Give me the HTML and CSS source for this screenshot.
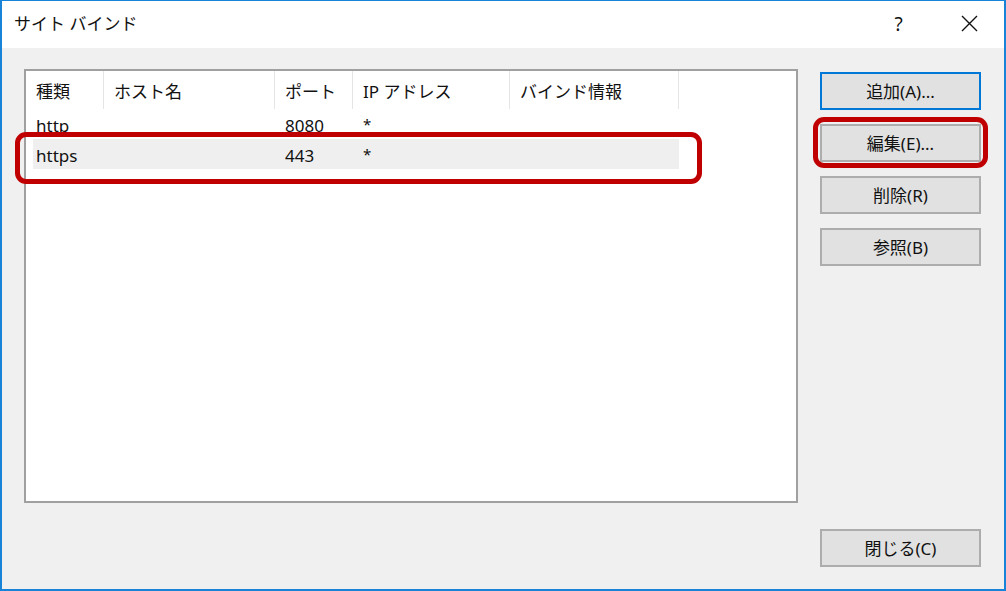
FILE: index.html
```html
<!DOCTYPE html>
<html lang="ja">

<head>
    <meta charset="UTF-8">
    <title>サイト バインド</title>
    <link rel="stylesheet" href="styles.css">
</head>

<body>
    <div class="Window">
        <div class="TitleBar">
            <span class="Title">サイト バインド</span>
            <div class="CapBtns">
                <span class="CapBtn">?</span>
                <span class="CapBtn">
                    <svg width="17" height="17" viewBox="0 0 17 17">
                        <path d="M1 1 L16 16 M16 1 L1 16" stroke="#111" stroke-width="1.4" fill="none" />
                    </svg>
                </span>
            </div>
        </div>
        <div class="Content">
            <div class="ListView">
                <div class="LvHead">
                    <div class="HeadCell">種類</div>
                    <div class="HeadCell">ホスト名</div>
                    <div class="HeadCell">ポート</div>
                    <div class="HeadCell">IP アドレス</div>
                    <div class="HeadCell">バインド情報</div>
                </div>
                <div class="LvBody">
                    <div class="LvRow">
                        <div class="Cell">http</div>
                        <div class="Cell"></div>
                        <div class="Cell">8080</div>
                        <div class="Cell star">*</div>
                        <div class="Cell"></div>
                    </div>
                    <div class="LvRow sel">
                        <div class="Cell">https</div>
                        <div class="Cell"></div>
                        <div class="Cell">443</div>
                        <div class="Cell star">*</div>
                        <div class="Cell"></div>
                        <div class="Mark RowMark"></div>
                    </div>
                </div>
            </div>
            <div class="BtnCol">
                <button class="Btn def">追加(A)...</button>
                <div class="BtnWrap">
                    <button class="Btn">編集(E)...</button>
                    <div class="Mark BtnMark"></div>
                </div>
                <button class="Btn">削除(R)</button>
                <button class="Btn">参照(B)</button>
                <button class="Btn CloseBtn">閉じる(C)</button>
            </div>
        </div>
    </div>
</body>

</html>
```

FILE: styles.css
```css
* {
    box-sizing: border-box;
}

body {
    margin: 0;
    background-color: #fff;
    font-family: "Noto Sans", "Noto Sans CJK JP", sans-serif;
    font-size: 17px;
    color: #111;
}

.Window {
    width: 1006px;
    height: 591px;
    border: 2px solid #1883d7;
    border-top-width: 1px;
    display: flex;
    flex-direction: column;
}

.TitleBar {
    height: 47px;
    background-color: #fff;
    display: flex;
    align-items: center;
    flex-shrink: 0;
}

.Title {
    padding-left: 12px;
    padding-bottom: 2px;
    line-height: 20px;
    font-size: 17px;
}

.CapBtns {
    margin-left: auto;
    display: flex;
    height: 100%;
}

.CapBtn {
    width: 69px;
    height: 100%;
    display: flex;
    align-items: center;
    justify-content: center;
    padding-bottom: 2px;
    font-size: 19px;
}

.CapBtn:first-child {
    padding-right: 4px;
}

.Content {
    flex: 1;
    background-color: #f0f0f0;
    display: flex;
    gap: 22px;
    padding: 21px 23px 22px 22px;
}

.ListView {
    width: 774px;
    height: 434px;
    background-color: #fff;
    border: 2px solid #a0a0a0;
    flex-shrink: 0;
}

.LvHead {
    display: grid;
    grid-template-columns: 78px 171px 78px 157px 169px;
    height: 38px;
}

.HeadCell {
    display: flex;
    align-items: center;
    padding-left: 10px;
    padding-top: 4px;
    border-right: 1px solid #e5e5e5;
    line-height: 20px;
}

.LvBody {
    padding-left: 7px;
}

.LvRow {
    display: grid;
    grid-template-columns: 71px 171px 78px 157px 169px;
    width: 646px;
    height: 30px;
    position: relative;
}

.LvRow.sel {
    background-color: #efefef;
}

.Cell {
    display: flex;
    align-items: center;
    padding-left: 10px;
    padding-top: 4px;
    line-height: 20px;
}

.Cell:first-child {
    padding-left: 3px;
}

.Cell.star {
    font-size: 15px;
    align-items: flex-start;
    padding-top: 5px;
}

.Mark {
    position: absolute;
    border: 5px solid #c00000;
    border-radius: 11px;
}

.RowMark {
    left: -18px;
    top: -7px;
    width: 687px;
    height: 52px;
}

.BtnCol {
    width: 161px;
    display: flex;
    flex-direction: column;
    gap: 14px;
    padding-top: 3px;
}

.Btn {
    width: 161px;
    height: 38px;
    background-color: #e1e1e1;
    border: 2px solid #adadad;
    font-family: "Noto Sans", "Noto Sans CJK JP", sans-serif;
    font-size: 17px;
    color: #111;
    line-height: 20px;
    padding: 1px 0 0;
}

.Btn.def {
    border-color: #0078d7;
}

.BtnWrap {
    position: relative;
    height: 38px;
}

.BtnMark {
    left: -7px;
    top: -7px;
    width: 175px;
    height: 51px;
}

.CloseBtn {
    margin-top: auto;
}
```
